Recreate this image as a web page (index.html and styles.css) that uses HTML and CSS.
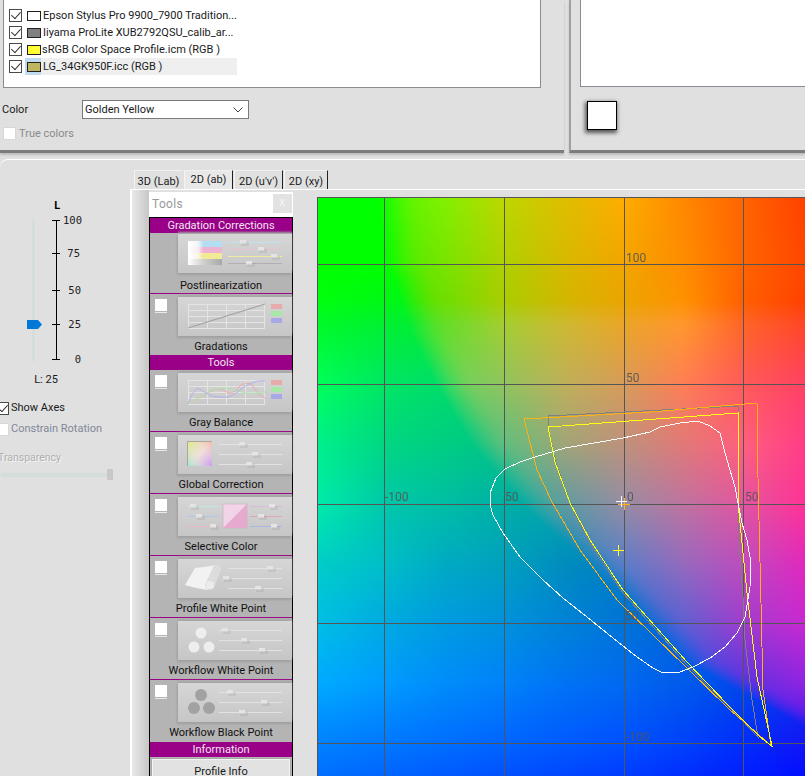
FILE: index.html
```html
<!DOCTYPE html>
<html lang="en">
<head>
<meta charset="utf-8">
<title>Profile Editor</title>
<link rel="stylesheet" href="styles.css">
</head>
<body>
<svg class="defs" aria-hidden="true">
  <defs>
    <g id="h"><rect x="-2" y="0" width="8" height="4" fill="#000" opacity=".06"/><rect x="-3" y="-2" width="6" height="3.500" fill="#e4e4e4"/></g>
    <linearGradient id="fadeC" x1="0" x2="1"><stop offset="0" stop-color="#fff"/><stop offset=".3" stop-color="#f2f6f8"/><stop offset=".45" stop-color="#b4dff2"/></linearGradient>
    <linearGradient id="fadeM" x1="0" x2="1"><stop offset="0" stop-color="#fff"/><stop offset=".3" stop-color="#f6eef2"/><stop offset=".45" stop-color="#eeb2d2"/></linearGradient>
    <linearGradient id="fadeY" x1="0" x2="1"><stop offset="0" stop-color="#fff"/><stop offset=".3" stop-color="#f6f6ea"/><stop offset=".45" stop-color="#f3ea96"/></linearGradient>
    <linearGradient id="fadeK" x1="0" x2="1"><stop offset="0" stop-color="#fff"/><stop offset=".45" stop-color="#d0d0d0"/><stop offset="1" stop-color="#a8a8a8"/></linearGradient>
    <linearGradient id="hue" x1="0" y1="0" x2="1" y2="1"><stop offset="0" stop-color="#dcea8c"/><stop offset=".5" stop-color="#f0e0dc"/><stop offset="1" stop-color="#cc9cf0"/></linearGradient>
    <linearGradient id="hueG" x1="1" y1="0" x2="0" y2="1"><stop offset="0" stop-color="#f4b0a0" stop-opacity=".8"/><stop offset=".5" stop-color="#f0e0dc" stop-opacity="0"/><stop offset="1" stop-color="#98e8c8" stop-opacity=".9"/></linearGradient>
  </defs>
</svg>

<section class="top">
  <div class="panel panel-left">
    <div class="list">
      <div class="row"><span class="check on"></span><span class="swatch sw-white"></span><span class="row-text">Epson Stylus Pro 9900_7900 Tradition...</span></div>
      <div class="row"><span class="check on"></span><span class="swatch sw-gray"></span><span class="row-text">Iiyama ProLite XUB2792QSU_calib_ar...</span></div>
      <div class="row"><span class="check on"></span><span class="swatch sw-yellow"></span><span class="row-text tight">sRGB Color Space Profile.icm (RGB )</span></div>
      <div class="row selected"><span class="check on"></span><span class="swatch-wrap"><span class="swatch sw-gold"></span></span><span class="row-text sel-text">LG_34GK950F.icc (RGB )</span></div>
    </div>
    <div class="color-row">
      <span class="color-label">Color</span>
      <div class="combo"><span class="combo-text">Golden Yellow</span>
        <svg class="chev" viewBox="0 0 10 6" width="10" height="6"><path d="M.5.5 5 5 9.5.5" fill="none" stroke="#444"/></svg>
      </div>
    </div>
    <div class="true-row"><span class="check off"></span><span class="muted">True colors</span></div>
  </div>
  <div class="panel panel-right">
    <div class="list-right"></div>
    <div class="big-swatch"></div>
  </div>
</section>

<main class="main">
  <aside class="side">
    <div class="scale">
      <div class="scale-title">L</div>
      <div class="scale-body">
        <div class="track"></div>
        <svg class="thumb" viewBox="0 0 15 9" width="15" height="9"><path d="M0 0H11L15 4.500 11 9H0Z" fill="#0078d7"/></svg>
        <div class="ruler">
          <span class="tick t100">100</span>
          <span class="tick t75">75</span>
          <span class="tick t50">50</span>
          <span class="tick t25">25</span>
          <span class="tick t0">0</span>
        </div>
      </div>
      <div class="scale-value">L: 25</div>
    </div>
    <div class="opt opt-axes"><span class="check on"></span><span>Show Axes</span></div>
    <div class="opt opt-rot"><span class="check off"></span><span class="muted-blue">Constrain Rotation</span></div>
    <div class="transp">Transparency</div>
    <div class="hslider"><span class="hthumb"></span></div>
  </aside>

  <div class="work">
    <nav class="tabs">
      <span class="tab t1">3D (Lab)</span>
      <span class="tab t2 active">2D (ab)</span>
      <span class="tab t3">2D (u'v')</span>
      <span class="tab t4">2D (xy)</span>
    </nav>
    <div class="stage">
      <div class="strip"></div>
      <div class="tools">
        <div class="tools-title"><span>Tools</span><span class="close">x</span></div>
        <div class="tools-body">
          <div class="head">Gradation Corrections</div>
          <div class="tool first">
            <svg class="card" viewBox="0 0 114 39">
              <rect x="10" y="7" width="34" height="6" fill="url(#fadeC)"/><rect x="10" y="13" width="34" height="6" fill="url(#fadeM)"/><rect x="10" y="19" width="34" height="6" fill="url(#fadeY)"/><rect x="10" y="25" width="34" height="6" fill="url(#fadeK)"/>
              <path d="M50 8.500H104" stroke="#bfe2f0"/><path d="M50 15.500H104" stroke="#e8c0d6"/><path d="M50 22.500H104" stroke="#f0ea9c"/><path d="M50 29.500H104" stroke="#b0b0b0"/>
              <use href="#h" x="65" y="8"/><use href="#h" x="83" y="15"/><use href="#h" x="96" y="22"/><use href="#h" x="71" y="29"/>
            </svg>
            <div class="tool-name">Postlinearization</div>
          </div>
          <div class="tool">
            <span class="tool-check"></span>
            <svg class="card" viewBox="0 0 114 39">
              <path d="M10 7.500H87M10 13.500H87M10 19.500H87M10 25.500H87M10 31.500H87M10.500 7V32M29.500 7V32M48.500 7V32M67.500 7V32M86.500 7V32" stroke="#e4e4e4" fill="none"/>
              <path d="M10 31 87 7" stroke="#a4a4a4" stroke-width="1.200"/>
              <rect x="93" y="7" width="11" height="5" fill="#e8abab"/><rect x="93" y="14" width="11" height="5" fill="#a6e8a6"/><rect x="93" y="21" width="11" height="5" fill="#a8a8e8"/>
            </svg>
            <div class="tool-name">Gradations</div>
          </div>
          <div class="head">Tools</div>
          <div class="tool">
            <span class="tool-check"></span>
            <svg class="card" viewBox="0 0 114 39">
              <path d="M10 7.500H87M10 13.500H87M10 19.500H87M10 25.500H87M10 31.500H87M10.500 7V32M29.500 7V32M48.500 7V32M67.500 7V32M86.500 7V32" stroke="#e4e4e4" fill="none"/>
              <path d="M10 30C20 26 28 20 38 16 46 14 50 24 57 18 62 12 68 8 74 12 78 18 82 24 87 25" stroke="#eeaaaa" fill="none"/>
              <path d="M10 30C22 26 28 18 38 16 48 13 58 18 68 20 76 21 82 19 87 19" stroke="#aee6ae" fill="none"/>
              <path d="M10 31C14 20 18 14 22 16 28 20 32 24 42 24 52 26 58 20 66 14 72 10 80 7 87 8" stroke="#b0b0ee" fill="none"/>
              <rect x="93" y="7" width="11" height="5" fill="#e8abab"/><rect x="93" y="14" width="11" height="5" fill="#a6e8a6"/><rect x="93" y="21" width="11" height="5" fill="#a8a8e8"/>
            </svg>
            <div class="tool-name">Gray Balance</div>
          </div>
          <div class="tool">
            <span class="tool-check"></span>
            <svg class="card" viewBox="0 0 114 39">
              <rect x="9" y="6" width="25" height="25" fill="#aaa89a"/><rect x="10" y="7" width="24" height="24" fill="url(#hue)"/><rect x="10" y="7" width="24" height="24" fill="url(#hueG)"/>
              <path d="M41 9.500H104M41 19.500H104M41 29.500H104" stroke="#e2e2e2"/>
              <use href="#h" x="64" y="9"/><use href="#h" x="77" y="19"/><use href="#h" x="71" y="29"/>
            </svg>
            <div class="tool-name">Global Correction</div>
          </div>
          <div class="tool">
            <span class="tool-check"></span>
            <svg class="card" viewBox="0 0 114 39">
              <rect x="45" y="7" width="24" height="24" fill="#f2d4e8" stroke="#b8a8b4" stroke-width=".5"/><path d="M45 31 69 7V31Z" fill="#e6aacf"/>
              <path d="M10 9.500H41" stroke="#bfe8e0"/><path d="M10 19.500H41" stroke="#b0c8e8"/><path d="M10 29.500H41" stroke="#e8b8c4"/>
              <path d="M72 9.500H104" stroke="#dcb8dc"/><path d="M72 19.500H104" stroke="#e0a8b4"/><path d="M72 29.500H104" stroke="#a8b8e4"/>
              <use href="#h" x="15" y="9"/><use href="#h" x="21" y="19"/><use href="#h" x="35" y="29"/><use href="#h" x="94" y="9"/><use href="#h" x="83" y="19"/><use href="#h" x="96" y="29"/>
            </svg>
            <div class="tool-name">Selective Color</div>
          </div>
          <div class="tool">
            <span class="tool-check"></span>
            <svg class="card" viewBox="0 0 114 39">
              <path d="M7 26 17 9C22 8 30 8 36 6L30 31C22 30 14 28 7 26Z" fill="#f2f2f2"/>
              <path d="M36 6C40 5 44 7 43 11L37 26A5 5 0 0 1 27 26Z" fill="#dcdcdc"/>
              <circle cx="32" cy="26" r="4" fill="#ebebeb"/>
              <path d="M50 9.500H104M50 19.500H104M50 29.500H104" stroke="#e2e2e2"/>
              <use href="#h" x="92" y="9"/><use href="#h" x="48" y="19"/><use href="#h" x="80" y="29"/>
            </svg>
            <div class="tool-name">Profile White Point</div>
          </div>
          <div class="tool">
            <span class="tool-check"></span>
            <svg class="card" viewBox="0 0 114 39">
              <circle cx="23" cy="12" r="5.500" fill="#eee"/><circle cx="16" cy="26" r="5.500" fill="#eee"/><circle cx="31" cy="26" r="5.500" fill="#eee"/>
              <path d="M41 9.500H104M41 19.500H104M41 29.500H104" stroke="#e2e2e2"/>
              <use href="#h" x="47" y="9"/><use href="#h" x="66" y="19"/><use href="#h" x="84" y="29"/>
            </svg>
            <div class="tool-name">Workflow White Point</div>
          </div>
          <div class="tool">
            <span class="tool-check"></span>
            <svg class="card" viewBox="0 0 114 39">
              <circle cx="23" cy="12" r="6" fill="#a2a2a2"/><circle cx="16" cy="25" r="6" fill="#a2a2a2"/><circle cx="31" cy="25" r="6" fill="#a2a2a2"/>
              <path d="M41 9.500H104M41 19.500H104M41 29.500H104" stroke="#e2e2e2"/>
              <use href="#h" x="52" y="9"/><use href="#h" x="86" y="19"/><use href="#h" x="64" y="29"/>
            </svg>
            <div class="tool-name">Workflow Black Point</div>
          </div>
          <div class="head">Information</div>
          <div class="info-btn">Profile Info</div>
        </div>
      </div>
      <div class="chart">
        <canvas id="field" width="488" height="579"></canvas>
        <svg class="overlay" viewBox="317 197 488 579">
          <g class="grid">
            <path d="M317 197.500H805M317 264.500H805M317 384.500H805M317 504.500H805M317 623.500H805M317 743.500H805"/>
            <path d="M317.500 197V776M384.500 197V776M504.500 197V776M624.500 197V776M743.500 197V776"/>
          </g>
          <polygon class="g-gray" points="548,416 739,406 738,530 743,597 745,640 752,700 758,737 740,718 687,665 623,593 590,543 570,503 555,460 548,427"/>
          <polygon class="g-orange" points="524,419 650,412 757,403 758,478 761,603 763,690 771,746 757,733 730,710 687,668 617,600 580,550 552,502 537,470"/>
          <polygon class="g-yellow" points="548,427 738,413 738,457 739,513 747,593 757,677 772,746 760,737 728,705 687,662 623,590 590,540 570,503 555,462"/>
          <polygon class="g-white" points="490,505 490,493 496,478 505,469 520,462 535,457 565,448 600,442 623,438 650,432 660,427 680,423 698,421 710,426 720,433 725,453 730,470 735,487 738,503 742,523 747,540 751,563 750,587 745,617 737,633 725,647 710,658 693,667 680,672 663,673 653,668 637,657 613,638 587,617 563,598 543,580 520,557 503,533 493,515"/>
          <path class="c-orange" d="M618 504.500H630M624.500 498V510"/>
          <path class="c-yellow" d="M613 550.500H624M618.500 545V556"/>
          <path class="c-white" d="M616 501.500H627M621.500 496V507"/>
        </svg>
        <span class="ax ax1">100</span>
        <span class="ax ax2">50</span>
        <span class="ax ax3">-100</span>
        <span class="ax ax4">50</span>
        <span class="ax ax5">0</span>
        <span class="ax ax6">50</span>
        <span class="ax ax7">50</span>
        <span class="ax ax8">-100</span>
      </div>
    </div>
  </div>
</main>
<script src="chart.js"></script>
</body>
</html>
```
FILE: styles.css
```css
* { box-sizing: border-box; }
html, body { margin: 0; height: 776px; overflow: hidden; }
body {
  width: 805px;
  background: #e0e0e0;
  color: #1a1a1a;
  font: 11px/16px Roboto, "Liberation Sans", Arial, sans-serif;
}
.defs { position: absolute; width: 0; height: 0; }

/* top panels */
.top { display: flex; justify-content: space-between; height: 153px; }
.panel { position: relative; background: #e0e0e0; height: 153px; border-bottom: 3px solid #7c7c7c; box-shadow: 0 2px 2px #bcbcbc; }
.panel-left { width: 564px; padding-left: 3px; }
.panel-right { width: 236px; border-left: 2px solid #a0a0a0; padding-left: 9px; }
.list { width: 538px; height: 88px; background: #fff; border: 1px solid #8c8c8c; border-top: 0; padding-top: 7px; }
.row { display: flex; align-items: center; height: 17px; padding-left: 5px; }
.check { display: inline-block; position: relative; flex: none; width: 13px; height: 13px; background: #fff; border: 1px solid #4a4a4a; }
.check.on::after { content: ""; position: absolute; left: 1px; top: 1px; width: 9px; height: 5px; border-left: 1px solid #333; border-bottom: 1px solid #333; transform: rotate(-48deg) scale(.9); }
.check.off { border-color: #d8d8d8; }
.swatch { flex: none; width: 14px; height: 10px; margin-left: 5px; border: 1px solid #222; }
.sw-white { background: #fff; }
.sw-gray { background: #808080; }
.sw-yellow { background: #ffff33; }
.sw-gold { background: #bfb65f; margin-left: 2px; }
.swatch-wrap { display: flex; align-items: center; flex: none; width: 16px; height: 17px; margin-left: 3px; background: #bfdcf0; }
.row-text { margin-left: 2px; padding-top: 1px; white-space: nowrap; }
.row-text.tight { margin-left: 1px; }
.sel-text { flex: none; width: 196px; margin-left: 0; height: 17px; padding-left: 2px; background: #efefef; }
.color-row { display: flex; align-items: center; height: 19px; margin-top: 12px; margin-left: -1px; }
.color-label { width: 80px; padding-top: 1px; }
.combo { display: flex; align-items: center; justify-content: space-between; width: 167px; height: 19px; padding: 0 5px 0 2px; background: #fff; border: 1px solid #7a7a7a; }
.combo-text { padding-top: 1px; }
.true-row { display: flex; align-items: center; gap: 3px; margin-top: 8px; height: 13px; }
.muted { color: #8a8a8a; }
.list-right { height: 87px; background: #fff; border-left: 1px solid #8a8a96; border-bottom: 1px solid #8a8a96; }
.big-swatch { width: 30px; height: 29px; margin: 14px 0 0 7px; background: #fff; border: 1px solid #000; box-shadow: -1px 2px 4px 1px #555; }

/* main */
.main { display: flex; height: 617px; margin-top: 6px; border-top: 1px solid #fff; border-top-left-radius: 8px; }
.side { width: 130px; flex: none; }
.scale { height: 230px; padding-top: 39px; }
.scale-title { width: 114px; font: bold 11px/14px "DejaVu Sans Mono", monospace; color: #000; text-align: center; height: 14px; }
.scale-body { position: relative; height: 146px; }
.track { position: absolute; left: 32px; top: 6px; width: 3px; height: 142px; background: #d5dcdc; }
.thumb { position: absolute; left: 27px; top: 107px; display: block; }
.ruler { position: absolute; left: 56px; top: 7px; width: 1px; height: 139px; background: #000; }
.tick { position: absolute; left: 0; width: 40px; font: 10.500px/12px "DejaVu Sans Mono", monospace; color: #222; text-align: right; height: 12px; transform: translateY(-6px); }
.tick::before { content: ""; position: absolute; left: -4px; top: 6px; width: 8px; height: 1px; background: #000; }
.t100 { top: 0; width: 26px; }
.t75 { top: 33px; width: 24px; }
.t50 { top: 70px; width: 25px; }
.t25 { top: 104px; width: 25px; }
.t0 { top: 139px; width: 25px; }
.scale-value { margin-top: 13px; width: 92px; text-align: center; }
.opt { display: flex; align-items: center; gap: 2px; height: 14px; margin-left: -4px; }
.opt-axes { margin-top: 11px; }
.opt-rot { margin-top: 7px; }
.muted-blue { color: #80889a; }
.transp { margin: 14px 0 0 -2px; color: #b0b0b0; text-shadow: 1px 1px 0 #f4f4f4; font-size: 10.500px; }
.hslider { position: relative; width: 112px; height: 4px; margin: 7px 0 0 1px; background: #d4dcdc; }
.hthumb { position: absolute; right: 0; top: -4px; width: 6px; height: 11px; background: #c8c8c8; }

/* tabs */
.work { flex: 1; min-width: 0; display: flex; flex-direction: column; }
.tabs { display: flex; height: 19px; margin-top: 10px; padding-left: 4px; gap: 1px; line-height: 21px; flex: none; }
.tab { height: 19px; border-top: 1px solid #f0f0f0; border-left: 1px solid #f4f4f4; border-right: 1px solid #222; white-space: nowrap; text-align: center; }
.t1 { width: 49px; border-right-color: #e0e0e0; }
.t2 { width: 49px; }
.t3 { width: 49px; }
.t4 { width: 44px; }
.tab.active { background: #e8e8e8; line-height: 18px; }

/* stage */
.stage { display: flex; align-items: flex-start; flex: 1; min-height: 0; overflow: hidden; border-top: 1px solid #fff; border-left: 2px solid #fff; position: relative; }
.strip { flex: none; width: 17px; height: 100%; background: linear-gradient(90deg, #e9e9e9, #c6c6c6); }
.tools { flex: none; width: 144px; margin-top: 2px; }
.tools-title { display: flex; justify-content: space-between; height: 25px; padding: 2px 1px 0 3px; background: #fff; color: #9a9a9a; font-size: 12px; line-height: 21px; letter-spacing: .3px; }
.close { width: 19px; height: 19px; background: #e2e2e2; color: #f2f2f2; text-align: center; line-height: 17px; }
.tools-body { background: #b4b4b4; border: 1px solid #000; border-bottom: 0; }
.head { height: 15px; background: #990087; color: #f2e4f0; text-align: center; line-height: 16px; }
.tool { position: relative; height: 62px; padding: 3px 0 0 28px; border-bottom: 1px solid #990087; }
.tool.first { height: 61px; padding-top: 1px; }
.tool:has(+ .head) { border-bottom: 0; }
.tool:nth-child(3) { height: 61px; }
.tool-check { position: absolute; left: 5px; top: 5px; width: 12px; height: 12px; background: #fff; box-shadow: 0 1px 0 #b4b4b4, 0 2px 0 #e8e8e8; }
.card { display: block; width: 114px; height: 39px; background: linear-gradient(#d6d6d6, #c6c6c6); box-shadow: 0 -2px 2px #a6a6a6, -1px 2px 2px #a0a0a0; }
.tool-name { position: absolute; left: 0; right: 0; top: 45px; height: 16px; text-align: center; color: #111; }
.info-btn { height: 24px; margin: 1px 1px 0; padding-top: 5px; background: #e2e2e2; border: 1px solid #a8a8a8; box-shadow: inset 0 0 0 1px #f4f4f4; text-align: center; }

/* chart */
.chart { position: relative; flex: none; width: 488px; height: 579px; margin: 7px 0 0 24px; }
#field { display: block; }
.overlay { position: absolute; left: 0; top: 0; width: 488px; height: 579px; shape-rendering: crispEdges; }
.grid path { stroke: #555; fill: none; }
polygon { fill: none; stroke-width: 1; }
.g-gray { stroke: #808080; }
.g-orange { stroke: #ffb014; }
.g-yellow { stroke: #ffff14; }
.g-white { stroke: #fff; }
.c-orange { stroke: #ffb014; fill: none; }
.c-yellow { stroke: #ffff14; fill: none; }
.c-white { stroke: #fff; fill: none; }
.ax { position: absolute; color: #555; opacity: .9; font-size: 12px; line-height: 14px; }
.ax1 { left: 309px; top: 54px; }
.ax2 { left: 309px; top: 174px; }
.ax3 { left: 68px; top: 293px; }
.ax4 { left: 188px; top: 293px; }
.ax5 { left: 310px; top: 293px; }
.ax6 { left: 428px; top: 293px; }
.ax7 { left: 308px; top: 412px; }
.ax8 { left: 309px; top: 533px; }
```
FILE: chart.js
```js
// Paints the a*b* colour field: a saturated outer field and an inner field,
// blended across the gamut-boundary curve, each defined by a control grid.
(function () {
  var canvas = document.getElementById('field');
  var ctx = canvas.getContext('2d');
  var X0 = 317, Y0 = 197;
  var xs = [317, 384, 444, 504, 564, 624, 684, 743, 805];
  var ys = [197, 264, 300, 324, 384, 444, 504, 564, 623, 683, 743, 776];

  var G = [0, 255, 0];
  var outer = [
    [G, G, G, G, G, G, G, G, G],
    [G, G, G, G, G, G, G, G, G],
    [[0,255,15],[0,248,20],[0,245,25],[0,240,25],[0,240,25],[0,240,25],[0,240,25],[0,240,25],[0,240,25]],
    [[0,250,40],[0,240,50],[0,235,55],[0,232,55],[0,230,55],[0,230,55],[0,230,55],[0,230,55],[0,230,55]],
    [[0,255,90],[0,230,100],[0,220,105],[0,215,105],[0,212,105],[0,210,105],[0,210,105],[0,210,105],[0,210,105]],
    [[0,240,140],[0,215,130],[0,205,130],[0,195,135],[0,190,135],[0,185,135],[0,185,135],[0,185,135],[0,185,135]],
    [[0,235,170],[0,200,170],[0,190,165],[0,175,165],[0,165,170],[0,155,170],[0,150,170],[0,150,170],[0,150,170]],
    [[0,205,200],[0,190,200],[0,170,195],[0,160,190],[0,140,190],[0,125,195],[0,115,200],[0,110,200],[0,105,200]],
    [[0,190,230],[0,170,225],[0,155,225],[0,145,220],[0,130,215],[0,115,215],[0,100,215],[0,90,215],[0,80,215]],
    [[0,170,255],[0,155,255],[0,140,250],[0,130,250],[0,115,245],[0,105,240],[0,90,235],[0,70,235],[10,50,235]],
    [[0,130,255],[0,120,255],[0,110,255],[0,100,255],[0,90,255],[0,80,255],[0,65,250],[0,45,250],[20,20,245]],
    [[0,110,255],[0,100,255],[0,90,255],[0,80,255],[0,70,255],[0,60,255],[0,45,255],[0,30,255],[0,15,255]]
  ];
  var inner = [
    [[0,255,0],[75,248,0],[130,240,0],[190,215,0],[222,190,0],[255,172,0],[255,135,0],[255,100,0],[255,65,0]],
    [[0,255,0],[60,240,0],[120,228,0],[175,208,0],[215,185,0],[242,165,0],[255,140,0],[255,100,0],[255,70,0]],
    [[0,255,0],[60,232,0],[110,222,0],[170,205,0],[210,182,0],[235,165,0],[255,145,0],[255,95,0],[255,65,0]],
    [[0,250,40],[40,235,40],[100,222,40],[165,205,50],[205,185,50],[235,165,40],[255,150,45],[255,100,40],[255,70,40]],
    [[0,255,90],[30,225,95],[100,215,90],[145,195,95],[190,175,90],[215,155,90],[255,125,85],[255,90,90],[255,65,100]],
    [[0,240,140],[0,215,130],[30,205,125],[95,190,125],[160,165,120],[190,145,125],[225,120,120],[255,95,125],[255,60,135]],
    [[0,235,170],[0,200,170],[0,190,165],[30,180,160],[95,155,160],[150,140,165],[190,115,160],[225,85,160],[255,50,150]],
    [[0,205,200],[0,190,200],[0,170,195],[0,160,190],[30,135,190],[90,125,200],[150,105,190],[190,75,190],[225,40,190]],
    [[0,190,230],[0,170,225],[0,155,225],[0,145,220],[0,130,215],[30,110,215],[95,95,210],[160,60,205],[200,40,210]],
    [[0,170,255],[0,155,255],[0,140,250],[0,130,250],[0,115,245],[0,105,240],[30,85,235],[90,50,225],[145,35,225]],
    [[0,130,255],[0,120,255],[0,110,255],[0,100,255],[0,90,255],[0,80,255],[0,65,250],[20,40,245],[50,20,240]],
    [[0,110,255],[0,100,255],[0,90,255],[0,80,255],[0,70,255],[0,60,255],[0,45,255],[0,30,255],[0,15,255]]
  ];
  // boundary of the inner field, as x for a given y
  var curve = [[197,378],[264,384],[277,393],[333,410],[387,437],[443,470],[510,527],[587,613],[660,683],[727,805],[776,900]];

  function seg(arr, v) {
    var i = 0;
    while (i < arr.length - 2 && v > arr[i + 1]) i++;
    return i;
  }
  function sample(grid, x, y) {
    var i = seg(xs, x), j = seg(ys, y);
    var u = (x - xs[i]) / (xs[i + 1] - xs[i]);
    var v = (y - ys[j]) / (ys[j + 1] - ys[j]);
    var out = [0, 0, 0];
    for (var k = 0; k < 3; k++) {
      var a = grid[j][i][k] * (1 - u) + grid[j][i + 1][k] * u;
      var b = grid[j + 1][i][k] * (1 - u) + grid[j + 1][i + 1][k] * u;
      out[k] = a * (1 - v) + b * v;
    }
    return out;
  }
  function boundary(y) {
    for (var i = 0; i < curve.length - 1; i++) {
      if (y <= curve[i + 1][0]) {
        var t = (y - curve[i][0]) / (curve[i + 1][0] - curve[i][0]);
        return curve[i][1] + t * (curve[i + 1][1] - curve[i][1]);
      }
    }
    return 900;
  }

  var img = ctx.createImageData(canvas.width, canvas.height);
  for (var py = 0; py < canvas.height; py++) {
    var y = py + Y0, xb = boundary(y);
    for (var px = 0; px < canvas.width; px++) {
      var x = px + X0;
      var t = Math.max(0, Math.min(1, (x - xb) / 40));
      t = t * (2 - t);
      var c;
      if (t === 0) c = sample(outer, x, y);
      else {
        var o = sample(outer, x, y), n = sample(inner, x, y);
        c = [o[0] + (n[0] - o[0]) * t, o[1] + (n[1] - o[1]) * t, o[2] + (n[2] - o[2]) * t];
      }
      var p = (py * canvas.width + px) * 4;
      img.data[p] = c[0]; img.data[p + 1] = c[1]; img.data[p + 2] = c[2]; img.data[p + 3] = 255;
    }
  }
  ctx.putImageData(img, 0, 0);
})();
```
